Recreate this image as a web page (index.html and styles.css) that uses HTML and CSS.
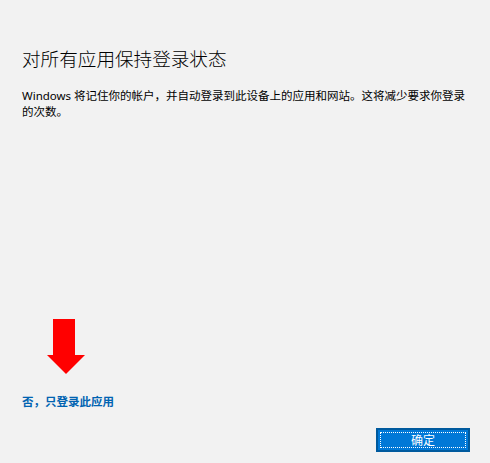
FILE: index.html
```html
<!DOCTYPE html>
<html lang="zh-CN">
<head>
<meta charset="utf-8">
<title>对所有应用保持登录状态</title>
<link rel="stylesheet" href="styles.css">
</head>
<body>
<div class="dialog">
  <h1 class="title">对所有应用保持登录状态</h1>
  <p class="desc">Windows 将记住你的帐户，并自动登录到此设备上的应用和网站。这将减少要求你登录的次数。</p>
  <div class="spacer"></div>
  <a class="link" href="#">否，只登录此应用</a>
  <div class="footer">
    <button class="btn" type="button">确定</button>
  </div>
  <svg class="arrow" width="38" height="56" viewBox="0 0 38 56" aria-hidden="true">
    <polygon points="6,0 28,0 28,36 38,36 19,55 0,36 6,36" fill="#ff0000"/>
  </svg>
</div>
</body>
</html>
```
FILE: styles.css
```css
html, body {
  margin: 0;
  padding: 0;
  background: #f2f2f2;
}
body {
  font-family: "Noto Sans", "Noto Sans CJK SC", sans-serif;
  color: #000;
}
.dialog {
  position: relative;
  height: 463px;
  box-sizing: border-box;
  padding: 44px 20px 11px 22px;
  display: flex;
  flex-direction: column;
}
.title {
  margin: 0;
  font-family: "Noto Sans CJK SC", sans-serif;
  font-weight: 300;
  font-size: 18.6px;
  line-height: 27px;
}
.desc {
  margin: 17px 0 0 0;
  padding-right: 2px;
  font-size: 11.5px;
  line-height: 15.5px;
}
.spacer {
  flex: 1;
}
.link {
  display: block;
  font-family: "Noto Sans CJK SC", sans-serif;
  font-weight: 700;
  font-size: 11.5px;
  line-height: 16px;
  color: #0063b1;
  text-decoration: none;
  margin-bottom: 19px;
}
.footer {
  display: flex;
  justify-content: flex-end;
}
.btn {
  width: 94px;
  height: 24px;
  box-sizing: border-box;
  background: #0078d7;
  border: 2px solid #005a9e;
  outline: 1px dotted #ffffff;
  outline-offset: -5px;
  color: #fff;
  font-family: "Noto Sans CJK SC", sans-serif;
  font-size: 12px;
  line-height: 18px;
  padding: 0;
}
.arrow {
  position: absolute;
  left: 47px;
  top: 319px;
}
```
